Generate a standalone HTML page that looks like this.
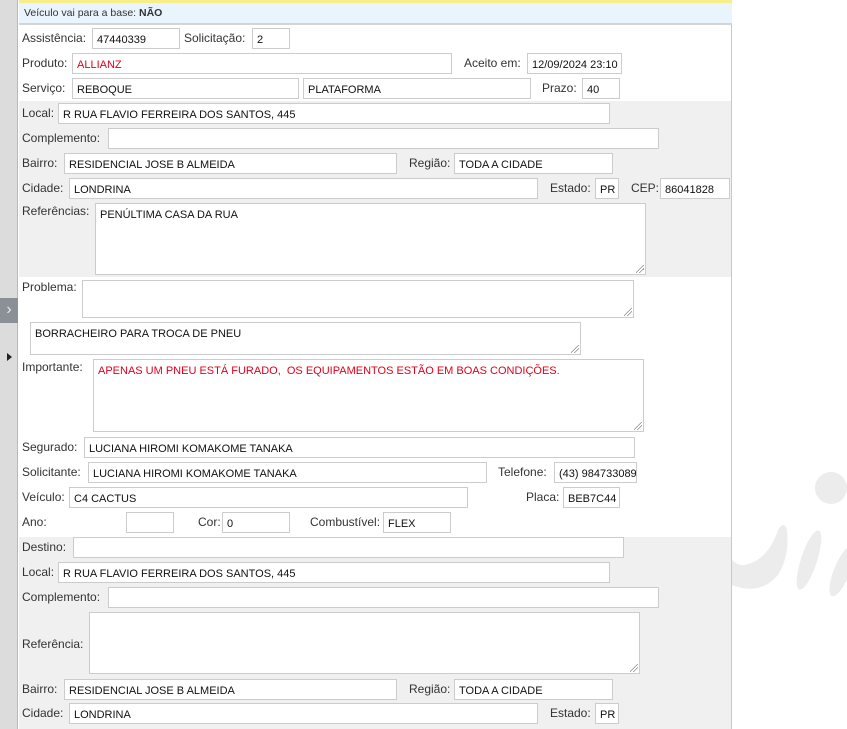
<!DOCTYPE html>
<html><head><meta charset="utf-8"><style>
*{box-sizing:border-box;margin:0;padding:0}
body{width:847px;height:729px;background:#fff;position:relative;overflow:hidden;font-family:"Liberation Sans",Tahoma,sans-serif;font-size:12px;color:#333}
.a{position:absolute}
.l{position:absolute;line-height:21px;white-space:nowrap;color:#333}
.i{position:absolute;height:21px;border:1px solid #ccc;background:#fff;font-size:11px;line-height:20px;padding-left:4px;padding-top:1px;color:#111;white-space:nowrap;overflow:hidden}
.t{position:absolute;border:1px solid #ccc;background:#fff;font-size:11px;padding:5px 4px;color:#111}
.t:after{content:"";position:absolute;right:1px;bottom:1px;width:8px;height:8px;background:linear-gradient(135deg,transparent 45%,#888 45%,#888 52%,transparent 52%,transparent 68%,#888 68%,#888 75%,transparent 75%)}
.r{color:#e0001a}
</style></head><body>
<svg class="a" style="left:0;top:0" width="847" height="729">
<circle cx="831" cy="488" r="16" fill="#ececec"/>
<path d="M732 556 L732 585 Q760 596 778 575 Q790 555 787 530 Q784 520 778 530 Q768 560 745 565 Q738 566 732 560 Z" fill="#ececec"/>
<ellipse cx="809" cy="560" rx="8" ry="31" transform="rotate(18 809 560)" fill="#ececec"/>
<ellipse cx="842" cy="571" rx="8" ry="27" transform="rotate(22 842 571)" fill="#ececec"/>
</svg>
<div class="a" style="left:0;top:0;width:18px;height:729px;background:#dcdcdc;border-right:1px solid #b8b8b8"></div>
<div class="a" style="left:0;top:298px;width:18px;height:25px;background:#8b9097;color:#e8e8e8;font-size:16px;line-height:24px;text-align:center">&#x203A;</div>
<div class="a" style="left:7px;top:353px;width:0;height:0;border-top:4px solid transparent;border-bottom:4px solid transparent;border-left:5px solid #222"></div>
<div class="a" style="left:19px;top:0;width:713px;height:729px;border-right:1px solid #c8c8c8"></div>
<div class="a" style="left:19px;top:0;width:713px;height:3px;background:#f7ee8a"></div>
<div class="a" style="left:19px;top:3px;width:713px;height:22px;background:#eaf4fd;border-bottom:2px solid #d4d4d4;font-size:10.5px;line-height:21px;padding-left:5px;color:#333">Veículo vai para a base: <b>NÃO</b></div>
<div class="a" style="left:19px;top:101px;width:712px;height:176px;background:#f0f0f0"></div>
<div class="a" style="left:19px;top:537px;width:712px;height:192px;background:#f0f0f0"></div>

<span class="l" style="left:22px;top:28px">Assistência:</span><div class="i" style="left:92px;top:28px;width:88px">47440339</div>
<span class="l" style="left:184px;top:28px">Solicitação:</span><div class="i" style="left:252px;top:28px;width:38px">2</div>
<span class="l" style="left:22px;top:53px">Produto:</span><div class="i r" style="left:72px;top:53px;width:380px;color:#e0001a">ALLIANZ</div>
<span class="l" style="left:464px;top:53px">Aceito em:</span><div class="i" style="left:527px;top:53px;width:95px">12/09/2024 23:10</div>
<span class="l" style="left:22px;top:78px">Serviço:</span><div class="i" style="left:72px;top:78px;width:227px">REBOQUE</div>
<div class="i" style="left:303px;top:78px;width:228px">PLATAFORMA</div>
<span class="l" style="left:542px;top:78px">Prazo:</span><div class="i" style="left:582px;top:78px;width:38px">40</div>

<span class="l" style="left:22px;top:103px">Local:</span><div class="i" style="left:58px;top:103px;width:552px">R RUA FLAVIO FERREIRA DOS SANTOS, 445</div>
<span class="l" style="left:22px;top:128px">Complemento:</span><div class="i" style="left:108px;top:128px;width:551px"></div>
<span class="l" style="left:22px;top:153px">Bairro:</span><div class="i" style="left:64px;top:153px;width:333px">RESIDENCIAL JOSE B ALMEIDA</div>
<span class="l" style="left:409px;top:153px">Região:</span><div class="i" style="left:454px;top:153px;width:159px">TODA A CIDADE</div>
<span class="l" style="left:22px;top:178px">Cidade:</span><div class="i" style="left:69px;top:178px;width:469px">LONDRINA</div>
<span class="l" style="left:550px;top:178px">Estado:</span><div class="i" style="left:595px;top:178px;width:24px">PR</div>
<span class="l" style="left:631px;top:178px">CEP:</span><div class="i" style="left:660px;top:178px;width:70px">86041828</div>
<span class="l" style="left:22px;top:201px">Referências:</span><div class="t" style="left:95px;top:203px;width:551px;height:72px">PENÚLTIMA CASA DA RUA</div>

<span class="l" style="left:22px;top:277px">Problema:</span><div class="t" style="left:82px;top:280px;width:552px;height:38px"></div>
<div class="t" style="left:30px;top:322px;width:551px;height:33px">BORRACHEIRO PARA TROCA DE PNEU</div>
<span class="l" style="left:22px;top:357px">Importante:</span><div class="t" style="left:93px;top:359px;width:551px;height:73px;color:#e0001a">APENAS UM PNEU ESTÁ FURADO,&nbsp; OS EQUIPAMENTOS ESTÃO EM BOAS CONDIÇÕES.</div>

<span class="l" style="left:22px;top:437px">Segurado:</span><div class="i" style="left:84px;top:437px;width:551px">LUCIANA HIROMI KOMAKOME TANAKA</div>
<span class="l" style="left:22px;top:462px">Solicitante:</span><div class="i" style="left:88px;top:462px;width:399px">LUCIANA HIROMI KOMAKOME TANAKA</div>
<span class="l" style="left:498px;top:462px">Telefone:</span><div class="i" style="left:554px;top:462px;width:83px">(43) 984733089</div>
<span class="l" style="left:22px;top:487px">Veículo:</span><div class="i" style="left:69px;top:487px;width:399px">C4 CACTUS</div>
<span class="l" style="left:526px;top:487px">Placa:</span><div class="i" style="left:563px;top:487px;width:57px">BEB7C44</div>
<span class="l" style="left:22px;top:512px">Ano:</span><div class="i" style="left:126px;top:512px;width:48px"></div>
<span class="l" style="left:198px;top:512px">Cor:</span><div class="i" style="left:222px;top:512px;width:68px">0</div>
<span class="l" style="left:310px;top:512px">Combustível:</span><div class="i" style="left:383px;top:512px;width:68px">FLEX</div>

<span class="l" style="left:22px;top:537px">Destino:</span><div class="i" style="left:73px;top:537px;width:551px"></div>
<span class="l" style="left:22px;top:562px">Local:</span><div class="i" style="left:58px;top:562px;width:552px">R RUA FLAVIO FERREIRA DOS SANTOS, 445</div>
<span class="l" style="left:22px;top:587px">Complemento:</span><div class="i" style="left:108px;top:587px;width:551px"></div>
<span class="l" style="left:22px;top:634px">Referência:</span><div class="t" style="left:89px;top:612px;width:551px;height:62px"></div>
<span class="l" style="left:22px;top:679px">Bairro:</span><div class="i" style="left:64px;top:679px;width:333px">RESIDENCIAL JOSE B ALMEIDA</div>
<span class="l" style="left:409px;top:679px">Região:</span><div class="i" style="left:454px;top:679px;width:159px">TODA A CIDADE</div>
<span class="l" style="left:22px;top:703px">Cidade:</span><div class="i" style="left:69px;top:703px;width:469px">LONDRINA</div>
<span class="l" style="left:550px;top:703px">Estado:</span><div class="i" style="left:595px;top:703px;width:24px">PR</div>
</body></html>
